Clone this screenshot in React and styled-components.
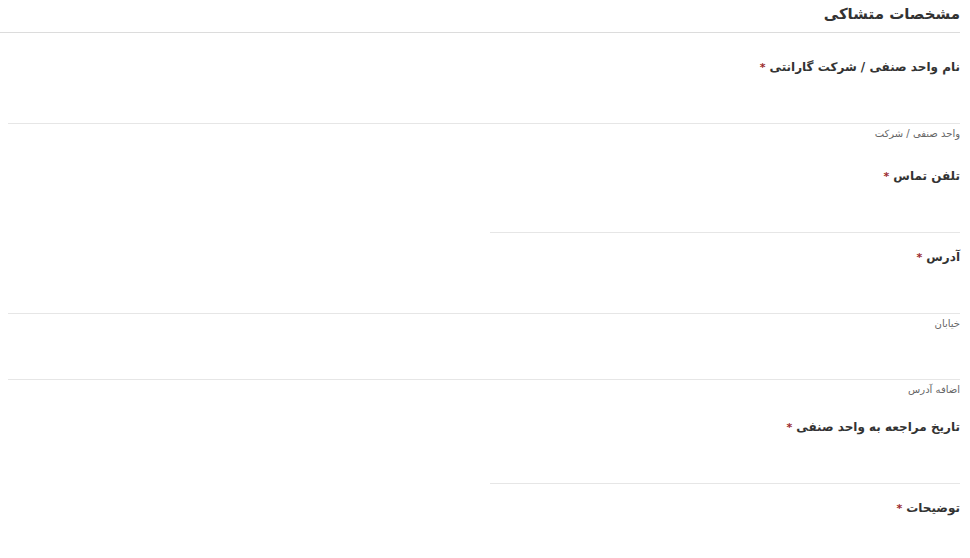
import React from "react";
import styled, { createGlobalStyle } from "styled-components";

const GlobalStyle = createGlobalStyle`
  body {
    margin: 0;
    background: #fff;
    font-family: "DejaVu Sans", "Noto Sans", sans-serif;
  }
`;

const Page = styled.div`
  direction: rtl;
  width: 970px;
  height: 558px;
  overflow: hidden;
  background: #fff;
  box-sizing: border-box;
`;

const Title = styled.h2`
  margin: 0 10px 0 0;
  font-size: 15px;
  font-weight: bold;
  color: #333;
  line-height: 28px;
  padding: 0 0 4px 0;
  border-bottom: 1px solid #dcdcdc;
`;

const Form = styled.div`
  padding: 24px 10px 0 8px;
  display: flex;
  flex-direction: column;
`;

const Field = styled.div`
  display: flex;
  flex-direction: column;
  margin-bottom: ${(p) => p.gap || 14}px;
`;

const Label = styled.label`
  font-size: 12px;
  font-weight: bold;
  color: #333;
  line-height: 20px;
`;

const Star = styled.span`
  color: #9b2c2c;
  font-size: 11px;
  margin-right: 4px;
`;

const Input = styled.div`
  height: 45px;
  width: ${(p) => (p.half ? "470px" : "100%")};
  border-bottom: 1px solid #e6e6e6;
  margin-top: ${(p) => (p.stacked ? "3px" : "0")};
`;

const Hint = styled.div`
  font-size: 10px;
  color: #666;
  line-height: 14px;
  margin-top: 3px;
`;

const App = () => {
  return (
    <Page>
      <GlobalStyle />
      <Title>مشخصات متشاکی</Title>
      <Form>
        <Field gap={25}>
          <Label>
            نام واحد صنفی / شرکت گارانتی<Star>*</Star>
          </Label>
          <Input />
          <Hint>واحد صنفی / شرکت</Hint>
        </Field>

        <Field>
          <Label>
            تلفن تماس<Star>*</Star>
          </Label>
          <Input half />
        </Field>

        <Field gap={20}>
          <Label>
            آدرس<Star>*</Star>
          </Label>
          <Input />
          <Hint>خیابان</Hint>
          <Input stacked />
          <Hint>اضافه آدرس</Hint>
        </Field>

        <Field>
          <Label>
            تاریخ مراجعه به واحد صنفی<Star>*</Star>
          </Label>
          <Input half />
        </Field>

        <Field>
          <Label>
            توضیحات<Star>*</Star>
          </Label>
        </Field>
      </Form>
    </Page>
  );
};

export default App;
